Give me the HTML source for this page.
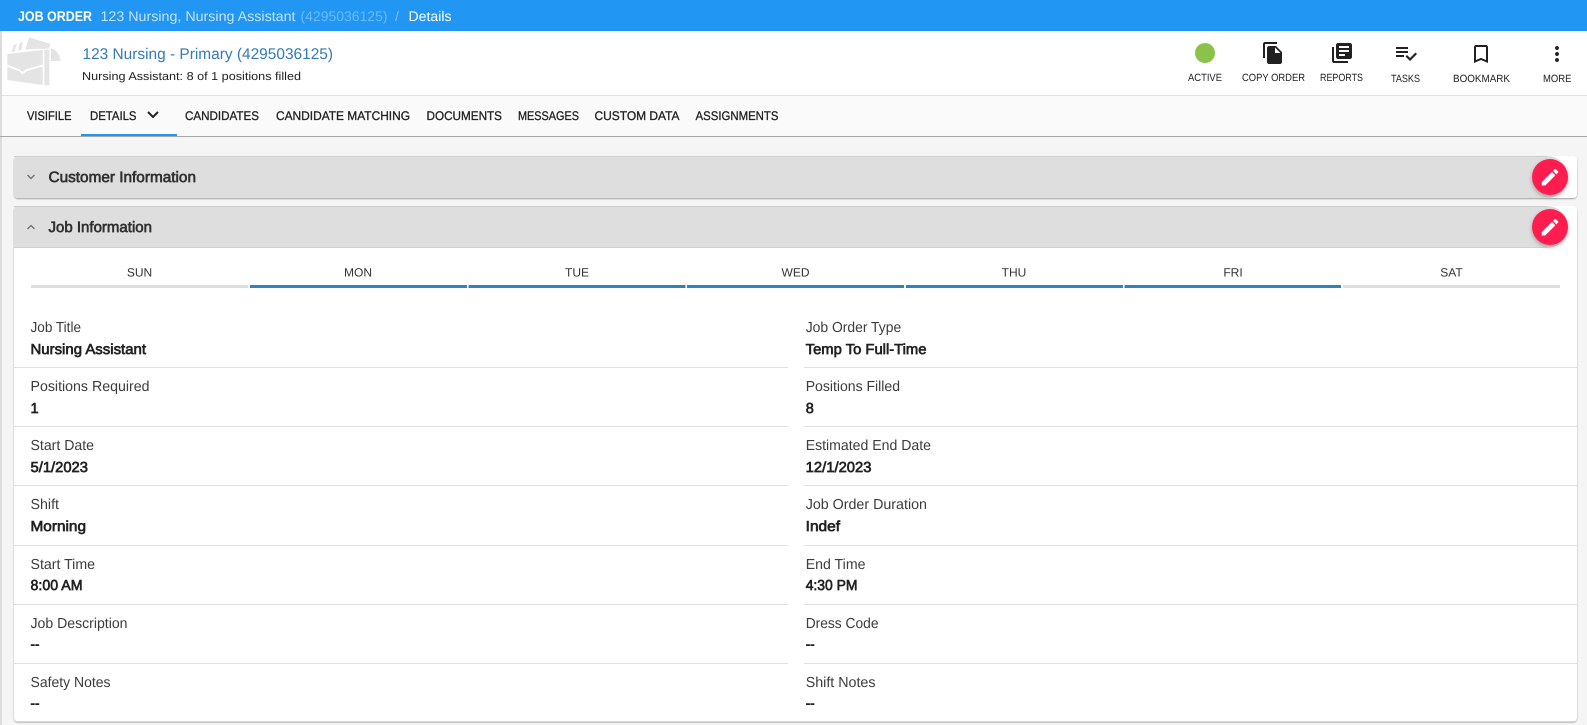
<!DOCTYPE html>
<html><head><meta charset="utf-8"><title>Job Order</title>
<style>
html,body{margin:0;padding:0;width:1587px;height:725px;overflow:hidden;background:#f5f5f5}
svg{display:block}
text{font-family:"Liberation Sans",Arial,sans-serif;fill:#212121}
.b{font-weight:700}
.l{font-size:14.5px;fill:#3c3c3c}
.v{font-size:14.5px;font-weight:400;fill:#212121;stroke:#212121;stroke-width:.65}
.t{font-size:12.5px;fill:#212121;font-weight:400;stroke:#212121;stroke-width:.3}
.i{font-size:10.5px;fill:#212121}
.d{font-size:12px;fill:#333;text-anchor:middle}
.h{font-size:15px;font-weight:400;fill:#303030;stroke:#303030;stroke-width:.65}
.w{fill:#fff}
</style></head><body>
<svg width="1587" height="725" viewBox="0 0 1587 725" xmlns="http://www.w3.org/2000/svg" text-rendering="geometricPrecision">
<defs>
<filter id="s" x="-5%" y="-20%" width="110%" height="140%"><feDropShadow dx="0" dy="1" stdDeviation=".8" flood-color="#000" flood-opacity=".35"/></filter>
<filter id="f" x="-40%" y="-40%" width="180%" height="180%"><feDropShadow dx="0" dy="2" stdDeviation="2" flood-color="#000" flood-opacity=".3"/></filter>
<path id="pen" d="M3 17.25V21h3.75L17.81 9.94l-3.75-3.75L3 17.25zM20.71 7.04c.39-.39.39-1.02 0-1.41l-2.34-2.34c-.39-.39-1.02-.39-1.41 0l-1.83 1.83 3.75 3.75 1.83-1.83z"/>
</defs>
<rect width="1587" height="725" fill="#f5f5f5"/>
<rect x="0" y="31" width="2" height="694" fill="#dcdcdc"/>

<!-- top bar -->
<rect width="1587" height="31" fill="#2196f3"/>
<text x="18" y="21" class="b w" font-size="14" textLength="74" lengthAdjust="spacingAndGlyphs">JOB ORDER</text>
<text x="100.5" y="21" font-size="14" style="fill:#c5e2fb" textLength="195" lengthAdjust="spacingAndGlyphs">123 Nursing, Nursing Assistant</text>
<text x="300.5" y="21" font-size="14" style="fill:#6cb9f7" textLength="87" lengthAdjust="spacingAndGlyphs">(4295036125)</text>
<text x="395" y="21" font-size="14" style="fill:#7cc0f8">/</text>
<text x="408.5" y="21" font-size="14" class="w" textLength="43" lengthAdjust="spacingAndGlyphs">Details</text>

<!-- header -->
<rect x="2" y="31" width="1585" height="64" fill="#fff"/>
<rect x="2" y="95" width="1585" height="1" fill="#e0e0e0"/>
<g transform="translate(0 30) scale(.3333)" fill="#e4e4e4">
<path d="M22 72 128 60V104C100 111 84 116 76 119L68 126 60 119C48 115 36 110 22 104Z"/>
<path d="M22 110C36 116 48 120 57 124L68 134 79 124C90 120 108 115 128 110V165L22 150Z"/>
<path d="M133 59H148V166H133Z"/>
<path d="M153 54C170 60 180 76 182 93H153Z"/>
<path d="M35 66 42 44 50 42 44 64Z"/>
<path d="M54 62 60 38 68 36 64 60Z"/>
<path d="M76 58 88 22 152 42 146 56 128 56Z"/>
</g>
<text x="82.5" y="59" font-size="15.5" style="fill:#337ab7" textLength="250.5" lengthAdjust="spacingAndGlyphs">123 Nursing - Primary (4295036125)</text>
<text x="82" y="80" font-size="11.5" textLength="219" lengthAdjust="spacingAndGlyphs">Nursing Assistant: 8 of 1 positions filled</text>

<circle cx="1205" cy="53" r="10" fill="#8bc34a"/>
<g fill="#212121">
<path transform="translate(1261 41)" d="M16 1H4c-1.100 0-2 .9-2 2v14h2V3h12V1zm-1 4l6 6v10c0 1.100-.9 2-2 2H7.990C6.890 23 6 22.100 6 21l.01-14c0-1.100.89-2 1.990-2h7zm-1 7h5.500L14 6.500V12z"/>
<path transform="translate(1330 41)" d="M4 6H2v14c0 1.100.9 2 2 2h14v-2H4V6zm16-4H8c-1.100 0-2 .9-2 2v12c0 1.100.9 2 2 2h12c1.100 0 2-.9 2-2V4c0-1.100-.9-2-2-2zm-1 9H9V9h10v2zm-4 4H9v-2h6v2zm4-8H9V5h10v2z"/>
<path transform="translate(1394 41)" d="M14 10H2v2h12v-2zm0-4H2v2h12V6zM2 16h8v-2H2v2zm19.500-4.500L23 13l-6.990 7-4.510-4.500L13 14l3.010 3 5.490-5.500z"/>
<path transform="translate(1469 42)" d="M17 3H7c-1.100 0-1.990.9-1.990 2L5 21l7-3 7 3V5c0-1.100-.9-2-2-2zm0 15l-5-2.180L7 18V5h10v13z"/>
<path transform="translate(1545 42)" d="M12 8c1.100 0 2-.9 2-2s-.9-2-2-2-2 .9-2 2 .9 2 2 2zm0 2c-1.100 0-2 .9-2 2s.9 2 2 2 2-.9 2-2-.9-2-2-2zm0 6c-1.100 0-2 .9-2 2s.9 2 2 2 2-.9 2-2-.9-2-2-2z"/>
</g>
<text x="1188" y="81" class="i" textLength="34" lengthAdjust="spacingAndGlyphs">ACTIVE</text>
<text x="1242" y="81" class="i" textLength="63" lengthAdjust="spacingAndGlyphs">COPY ORDER</text>
<text x="1320" y="81" class="i" textLength="43" lengthAdjust="spacingAndGlyphs">REPORTS</text>
<text x="1391" y="82" class="i" textLength="29" lengthAdjust="spacingAndGlyphs">TASKS</text>
<text x="1453" y="82" class="i" textLength="57" lengthAdjust="spacingAndGlyphs">BOOKMARK</text>
<text x="1543" y="82" class="i" textLength="28.500" lengthAdjust="spacingAndGlyphs">MORE</text>

<!-- tabs -->
<rect x="2" y="96" width="1585" height="40" fill="#fafafa"/>
<rect x="0" y="136" width="1587" height="1" fill="#a8a8a8"/>
<rect x="81" y="134" width="96" height="2" fill="#2196f3"/>
<text x="27" y="120" class="t" textLength="44.500" lengthAdjust="spacingAndGlyphs">VISIFILE</text>
<text x="90" y="120" class="t" textLength="46.500" lengthAdjust="spacingAndGlyphs">DETAILS</text>
<path d="M148 112 153 117 158 112" fill="none" stroke="#212121" stroke-width="2"/>
<text x="185" y="120" class="t" textLength="74" lengthAdjust="spacingAndGlyphs">CANDIDATES</text>
<text x="276" y="120" class="t" textLength="134" lengthAdjust="spacingAndGlyphs">CANDIDATE MATCHING</text>
<text x="426.500" y="120" class="t" textLength="75.500" lengthAdjust="spacingAndGlyphs">DOCUMENTS</text>
<text x="518" y="120" class="t" textLength="61" lengthAdjust="spacingAndGlyphs">MESSAGES</text>
<text x="594.500" y="120" class="t" textLength="85" lengthAdjust="spacingAndGlyphs">CUSTOM DATA</text>
<text x="695.500" y="120" class="t" textLength="83" lengthAdjust="spacingAndGlyphs">ASSIGNMENTS</text>

<!-- customer card -->
<rect x="14" y="156" width="1563" height="42" rx="4" fill="#fff" filter="url(#s)"/>
<path d="M18 156H1547A21 21 0 0 1 1547 198H18A4 4 0 0 1 14 194V160A4 4 0 0 1 18 156Z" fill="#dedede"/>
<rect x="14" y="156" width="1533" height="1" fill="#cfcfcf"/>
<path d="M27.500 175 31 178.500 34.500 175" fill="none" stroke="#6e6e6e" stroke-width="1.300"/>
<text x="48.500" y="182" class="h" textLength="147.500" lengthAdjust="spacingAndGlyphs">Customer Information</text>

<!-- job card -->
<rect x="14" y="206" width="1563" height="515.500" rx="4" fill="#fff" filter="url(#s)"/>
<path d="M18 206H1547A21 21 0 0 1 1547 248H14V210A4 4 0 0 1 18 206Z" fill="#dedede"/>
<rect x="14" y="206" width="1533" height="1" fill="#cfcfcf"/>
<rect x="14" y="247" width="1533" height="1" fill="#d2d2d2"/>
<path d="M27.500 229 31 225.500 34.500 229" fill="none" stroke="#6e6e6e" stroke-width="1.300"/>
<text x="48.500" y="232" class="h" textLength="103.500" lengthAdjust="spacingAndGlyphs">Job Information</text>

<!-- FABs -->
<circle cx="1550" cy="177" r="18" fill="#ff1a4f" filter="url(#f)"/>
<use href="#pen" transform="translate(1539 166.200) scale(.92)" fill="#fff"/>
<circle cx="1550" cy="227" r="18" fill="#ff1a4f" filter="url(#f)"/>
<use href="#pen" transform="translate(1539 216.200) scale(.92)" fill="#fff"/>

<!-- days -->
<rect x="31" y="285" width="217" height="3" fill="#dedede"/>
<rect x="250" y="285" width="217" height="3" fill="#2f83bd"/>
<rect x="468.500" y="285" width="217" height="3" fill="#2f83bd"/>
<rect x="687" y="285" width="217" height="3" fill="#2f83bd"/>
<rect x="906" y="285" width="217" height="3" fill="#2f83bd"/>
<rect x="1124.500" y="285" width="216.500" height="3" fill="#2f83bd"/>
<rect x="1343" y="285" width="217" height="3" fill="#dedede"/>
<text x="139.500" y="276.500" class="d">SUN</text>
<text x="358" y="276.500" class="d">MON</text>
<text x="577" y="276.500" class="d">TUE</text>
<text x="795.500" y="276.500" class="d">WED</text>
<text x="1014" y="276.500" class="d">THU</text>
<text x="1233" y="276.500" class="d">FRI</text>
<text x="1451.500" y="276.500" class="d">SAT</text>

<!-- dividers -->
<g fill="#e0e0e0">
<rect x="14" y="367" width="774" height="1"/><rect x="804" y="367" width="773" height="1"/>
<rect x="14" y="426" width="774" height="1"/><rect x="804" y="426" width="773" height="1"/>
<rect x="14" y="485" width="774" height="1"/><rect x="804" y="485" width="773" height="1"/>
<rect x="14" y="545" width="774" height="1"/><rect x="804" y="545" width="773" height="1"/>
<rect x="14" y="604" width="774" height="1"/><rect x="804" y="604" width="773" height="1"/>
<rect x="14" y="663" width="774" height="1"/><rect x="804" y="663" width="773" height="1"/>
</g>

<!-- left column -->
<text x="30.500" y="332" class="l" textLength="50.500" lengthAdjust="spacingAndGlyphs">Job Title</text>
<text x="30.500" y="354" class="v" textLength="115.500" lengthAdjust="spacingAndGlyphs">Nursing Assistant</text>
<text x="30.500" y="391" class="l" textLength="119" lengthAdjust="spacingAndGlyphs">Positions Required</text>
<text x="30.500" y="413" class="v">1</text>
<text x="30.500" y="450" class="l" textLength="63.500" lengthAdjust="spacingAndGlyphs">Start Date</text>
<text x="30.500" y="472" class="v" textLength="57.500" lengthAdjust="spacingAndGlyphs">5/1/2023</text>
<text x="30.500" y="509" class="l" textLength="28.500" lengthAdjust="spacingAndGlyphs">Shift</text>
<text x="30.500" y="531" class="v" textLength="55.500" lengthAdjust="spacingAndGlyphs">Morning</text>
<text x="30.500" y="569" class="l" textLength="64.500" lengthAdjust="spacingAndGlyphs">Start Time</text>
<text x="30.500" y="590" class="v" textLength="52" lengthAdjust="spacingAndGlyphs">8:00 AM</text>
<text x="30.500" y="628" class="l" textLength="97" lengthAdjust="spacingAndGlyphs">Job Description</text>
<text x="30.500" y="649" class="v" textLength="9" lengthAdjust="spacingAndGlyphs">--</text>
<text x="30.500" y="687" class="l" textLength="80" lengthAdjust="spacingAndGlyphs">Safety Notes</text>
<text x="30.500" y="708" class="v" textLength="9" lengthAdjust="spacingAndGlyphs">--</text>

<!-- right column -->
<text x="805.700" y="332" class="l" textLength="95.500" lengthAdjust="spacingAndGlyphs">Job Order Type</text>
<text x="805.700" y="354" class="v" textLength="120.800" lengthAdjust="spacingAndGlyphs">Temp To Full-Time</text>
<text x="805.700" y="391" class="l" textLength="94.300" lengthAdjust="spacingAndGlyphs">Positions Filled</text>
<text x="805.700" y="413" class="v">8</text>
<text x="805.700" y="450" class="l" textLength="125.300" lengthAdjust="spacingAndGlyphs">Estimated End Date</text>
<text x="805.700" y="472" class="v" textLength="65.800" lengthAdjust="spacingAndGlyphs">12/1/2023</text>
<text x="805.700" y="509" class="l" textLength="121.300" lengthAdjust="spacingAndGlyphs">Job Order Duration</text>
<text x="805.700" y="531" class="v" textLength="34.300" lengthAdjust="spacingAndGlyphs">Indef</text>
<text x="805.700" y="569" class="l" textLength="59.800" lengthAdjust="spacingAndGlyphs">End Time</text>
<text x="805.700" y="590" class="v" textLength="51.800" lengthAdjust="spacingAndGlyphs">4:30 PM</text>
<text x="805.700" y="628" class="l" textLength="72.800" lengthAdjust="spacingAndGlyphs">Dress Code</text>
<text x="805.700" y="649" class="v" textLength="9" lengthAdjust="spacingAndGlyphs">--</text>
<text x="805.700" y="687" class="l" textLength="69.800" lengthAdjust="spacingAndGlyphs">Shift Notes</text>
<text x="805.700" y="708" class="v" textLength="9" lengthAdjust="spacingAndGlyphs">--</text>
</svg>
</body></html>
